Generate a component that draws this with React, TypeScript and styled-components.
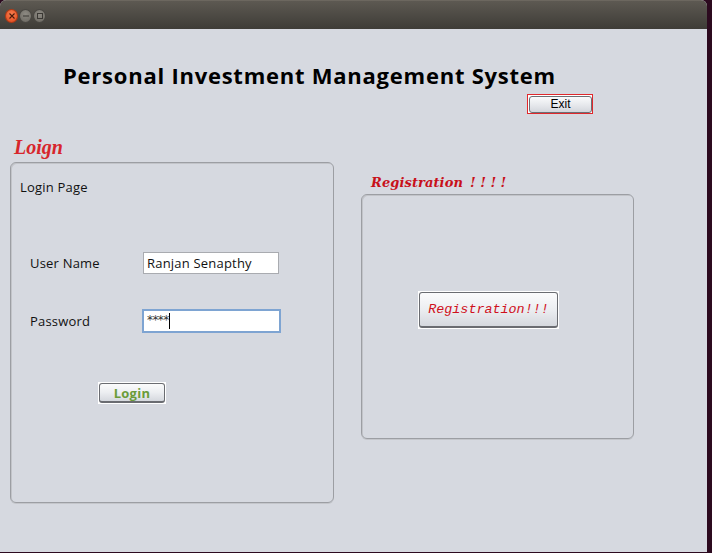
import styled, { createGlobalStyle } from 'styled-components';

const GlobalStyle = createGlobalStyle`
  html, body {
    margin: 0;
    padding: 0;
    background: #2c0a1f;
  }
  * {
    box-sizing: border-box;
  }
`;

const Desktop = styled.div`
  width: 712px;
  height: 553px;
  background: #2c0a1f;
  overflow: hidden;
`;

const Window = styled.div`
  width: 707px;
  height: 552px;
  display: flex;
  flex-direction: column;
  background: #d6d9e0;
  border-radius: 6px 6px 0 0;
  overflow: hidden;
`;

const TitleBar = styled.div`
  height: 29px;
  flex: 0 0 29px;
  display: flex;
  align-items: center;
  gap: 1px;
  padding: 1px 0 0 5px;
  background: linear-gradient(#5d5952, #3e3c37);
  border-top: 1px solid #6c675f;
`;

const WinButton = styled.div<{ $close?: boolean }>`
  width: 13px;
  height: 14px;
  border-radius: 50%;
  display: flex;
  align-items: center;
  justify-content: center;
  background: ${(p) =>
    p.$close
      ? 'radial-gradient(circle at 50% 35%, #f77f4f, #e0481c)'
      : 'radial-gradient(circle at 50% 35%, #8d8a83, #6a6760)'};
  border: 1px solid ${(p) => (p.$close ? '#b33a15' : '#4a4843')};
`;

const Body = styled.div`
  flex: 1;
  display: flex;
  flex-direction: column;
  padding: 0 0 0 10px;
`;

const AppTitle = styled.h1`
  margin: 33px 0 0 53px;
  height: 26px;
  font-family: 'Open Sans', 'DejaVu Sans', sans-serif;
  font-weight: 700;
  font-size: 22px;
  line-height: 26px;
  color: #000;
  letter-spacing: 0.76px;
`;

const ExitRow = styled.div`
  margin: 6px 0 0 517px;
`;

const FocusRing = styled.div`
  display: inline-flex;
  width: 66px;
  height: 20px;
  border: 1px solid #e0282c;
  background: #fff;
  padding: 1px 0 0 1px;
`;

const ExitButton = styled.button`
  width: 63px;
  height: 17px;
  padding: 0;
  border: 1px solid #6d6f74;
  border-radius: 3px;
  background: linear-gradient(#fafbfc, #e6e8ec 55%, #d3d6dc);
  font-family: 'Liberation Sans', Arial, sans-serif;
  font-size: 12px;
  line-height: 15px;
  color: #000;
`;

const Columns = styled.div`
  display: flex;
  align-items: flex-start;
  gap: 27px;
  margin-top: 22px;
`;

const Column = styled.div<{ $top?: number }>`
  display: flex;
  flex-direction: column;
  padding-top: ${(p) => p.$top ?? 0}px;
`;

const SectionLabel = styled.div`
  height: 26px;
  padding-left: 4px;
  font-family: 'Liberation Serif', 'Times New Roman', serif;
  font-style: italic;
  font-weight: 700;
  font-size: 20px;
  line-height: 22px;
  color: #d7262c;
`;

const SubLabel = styled.div`
  height: 18px;
  padding-left: 10px;
  font-family: 'DejaVu Serif', 'Liberation Serif', serif;
  font-style: italic;
  font-weight: 700;
  font-size: 13px;
  line-height: 14px;
  color: #c8101a;
  letter-spacing: 0.1px;
`;

const Bangs = styled.span`
  margin-left: 7px;
  letter-spacing: 4.5px;
`;

const Panel = styled.div<{ $w: number; $h: number }>`
  width: ${(p) => p.$w}px;
  height: ${(p) => p.$h}px;
  border: 1px solid #9c9ea3;
  border-radius: 6px;
  box-shadow: inset 1px 1px 0 #c2c4c9, 0 1px 0 #c4c6cb;
  display: flex;
  flex-direction: column;
`;

const PanelCaption = styled.div`
  margin: 16px 0 0 9px;
  font-family: 'Open Sans', 'DejaVu Sans', sans-serif;
  font-size: 13px;
  line-height: 16px;
  letter-spacing: 0.2px;
  color: #111;
`;

const Form = styled.div`
  display: flex;
  flex-direction: column;
  gap: 34px;
  margin: 56px 0 0 19px;
`;

const FieldRow = styled.div`
  display: grid;
  grid-template-columns: 113px auto;
  align-items: center;
  height: 24px;
`;

const FieldLabel = styled.span`
  font-family: 'Open Sans', 'DejaVu Sans', sans-serif;
  font-size: 13px;
  letter-spacing: 0.2px;
  color: #111;
`;

const TextBox = styled.div<{ $focus?: boolean }>`
  width: ${(p) => (p.$focus ? 139 : 136)}px;
  height: ${(p) => (p.$focus ? 24 : 22)}px;
  margin-left: ${(p) => (p.$focus ? -1 : 0)}px;
  background: #fff;
  border: ${(p) => (p.$focus ? '2px solid #7ea4d2' : '1px solid #a9abb0')};
  display: flex;
  align-items: center;
  padding-left: 3px;
  font-family: 'Open Sans', 'DejaVu Sans', sans-serif;
  font-size: 13px;
  letter-spacing: 0.2px;
  color: #111;
`;

const Caret = styled.span`
  display: inline-block;
  width: 1px;
  height: 16px;
  margin-left: 0;
  background: #000;
`;

const Stars = styled.span`
  font-family: 'DejaVu Sans', sans-serif;
  font-size: 12px;
  letter-spacing: -0.6px;
  color: #333;
  position: relative;
  top: -1px;
`;

const LoginButton = styled.button`
  margin: 49px 0 0 87px;
  width: 68px;
  height: 22px;
  padding: 0;
  border: 1px solid #fff;
  border-radius: 0;
  background: #fff;
  display: flex;
`;

const ButtonFace = styled.span<{ $h: number }>`
  flex: 1;
  height: ${(p) => p.$h}px;
  border: 1px solid #6a6c71;
  border-bottom-width: 2px;
  border-radius: 3px;
  background: linear-gradient(#fbfbfc, #eceef1 50%, #d5d8de);
  display: flex;
  align-items: center;
  justify-content: center;
`;

const LoginText = styled.span`
  font-family: 'Open Sans', 'DejaVu Sans', sans-serif;
  font-weight: 700;
  font-size: 13px;
  color: #6a9c38;
  letter-spacing: 0.3px;
`;

const RegButton = styled.button`
  margin: 96px 0 0 56px;
  width: 141px;
  height: 38px;
  padding: 1px;
  border: 0;
  background: #fff;
  display: flex;
`;

const RegText = styled.span`
  font-family: 'Liberation Mono', 'Courier New', monospace;
  font-style: italic;
  font-size: 13.4px;
  color: #d0101c;
`;

const Icon = styled.svg`
  display: block;
`;

export default function App() {
  return (
    <Desktop>
      <GlobalStyle />
      <Window>
        <TitleBar>
          <WinButton $close>
            <Icon width="6" height="6" viewBox="0 0 6 6">
              <path d="M0.5 0.5L5.5 5.5M5.5 0.5L0.5 5.5" stroke="#4a1a0a" strokeWidth="1.1" />
            </Icon>
          </WinButton>
          <WinButton>
            <Icon width="6" height="2" viewBox="0 0 6 2">
              <path d="M0 1H6" stroke="#3a3834" strokeWidth="1.2" />
            </Icon>
          </WinButton>
          <WinButton>
            <Icon width="6" height="6" viewBox="0 0 6 6">
              <rect x="0.5" y="0.5" width="5" height="5" fill="none" stroke="#3a3834" strokeWidth="1" />
            </Icon>
          </WinButton>
        </TitleBar>
        <Body>
          <AppTitle>Personal Investment Management System</AppTitle>
          <ExitRow>
            <FocusRing>
              <ExitButton>Exit</ExitButton>
            </FocusRing>
          </ExitRow>
          <Columns>
            <Column>
              <SectionLabel>Loign</SectionLabel>
              <Panel $w={324} $h={341}>
                <PanelCaption>Login Page</PanelCaption>
                <Form>
                  <FieldRow>
                    <FieldLabel>User Name</FieldLabel>
                    <TextBox>Ranjan Senapthy</TextBox>
                  </FieldRow>
                  <FieldRow>
                    <FieldLabel>Password</FieldLabel>
                    <TextBox $focus>
                      <Stars>****</Stars>
                      <Caret />
                    </TextBox>
                  </FieldRow>
                </Form>
                <LoginButton>
                  <ButtonFace $h={20}>
                    <LoginText>Login</LoginText>
                  </ButtonFace>
                </LoginButton>
              </Panel>
            </Column>
            <Column $top={40}>
              <SubLabel>
                Registration<Bangs>!!!!</Bangs>
              </SubLabel>
              <Panel $w={273} $h={245}>
                <RegButton>
                  <ButtonFace $h={36}>
                    <RegText>Registration!!!</RegText>
                  </ButtonFace>
                </RegButton>
              </Panel>
            </Column>
          </Columns>
        </Body>
      </Window>
    </Desktop>
  );
}
